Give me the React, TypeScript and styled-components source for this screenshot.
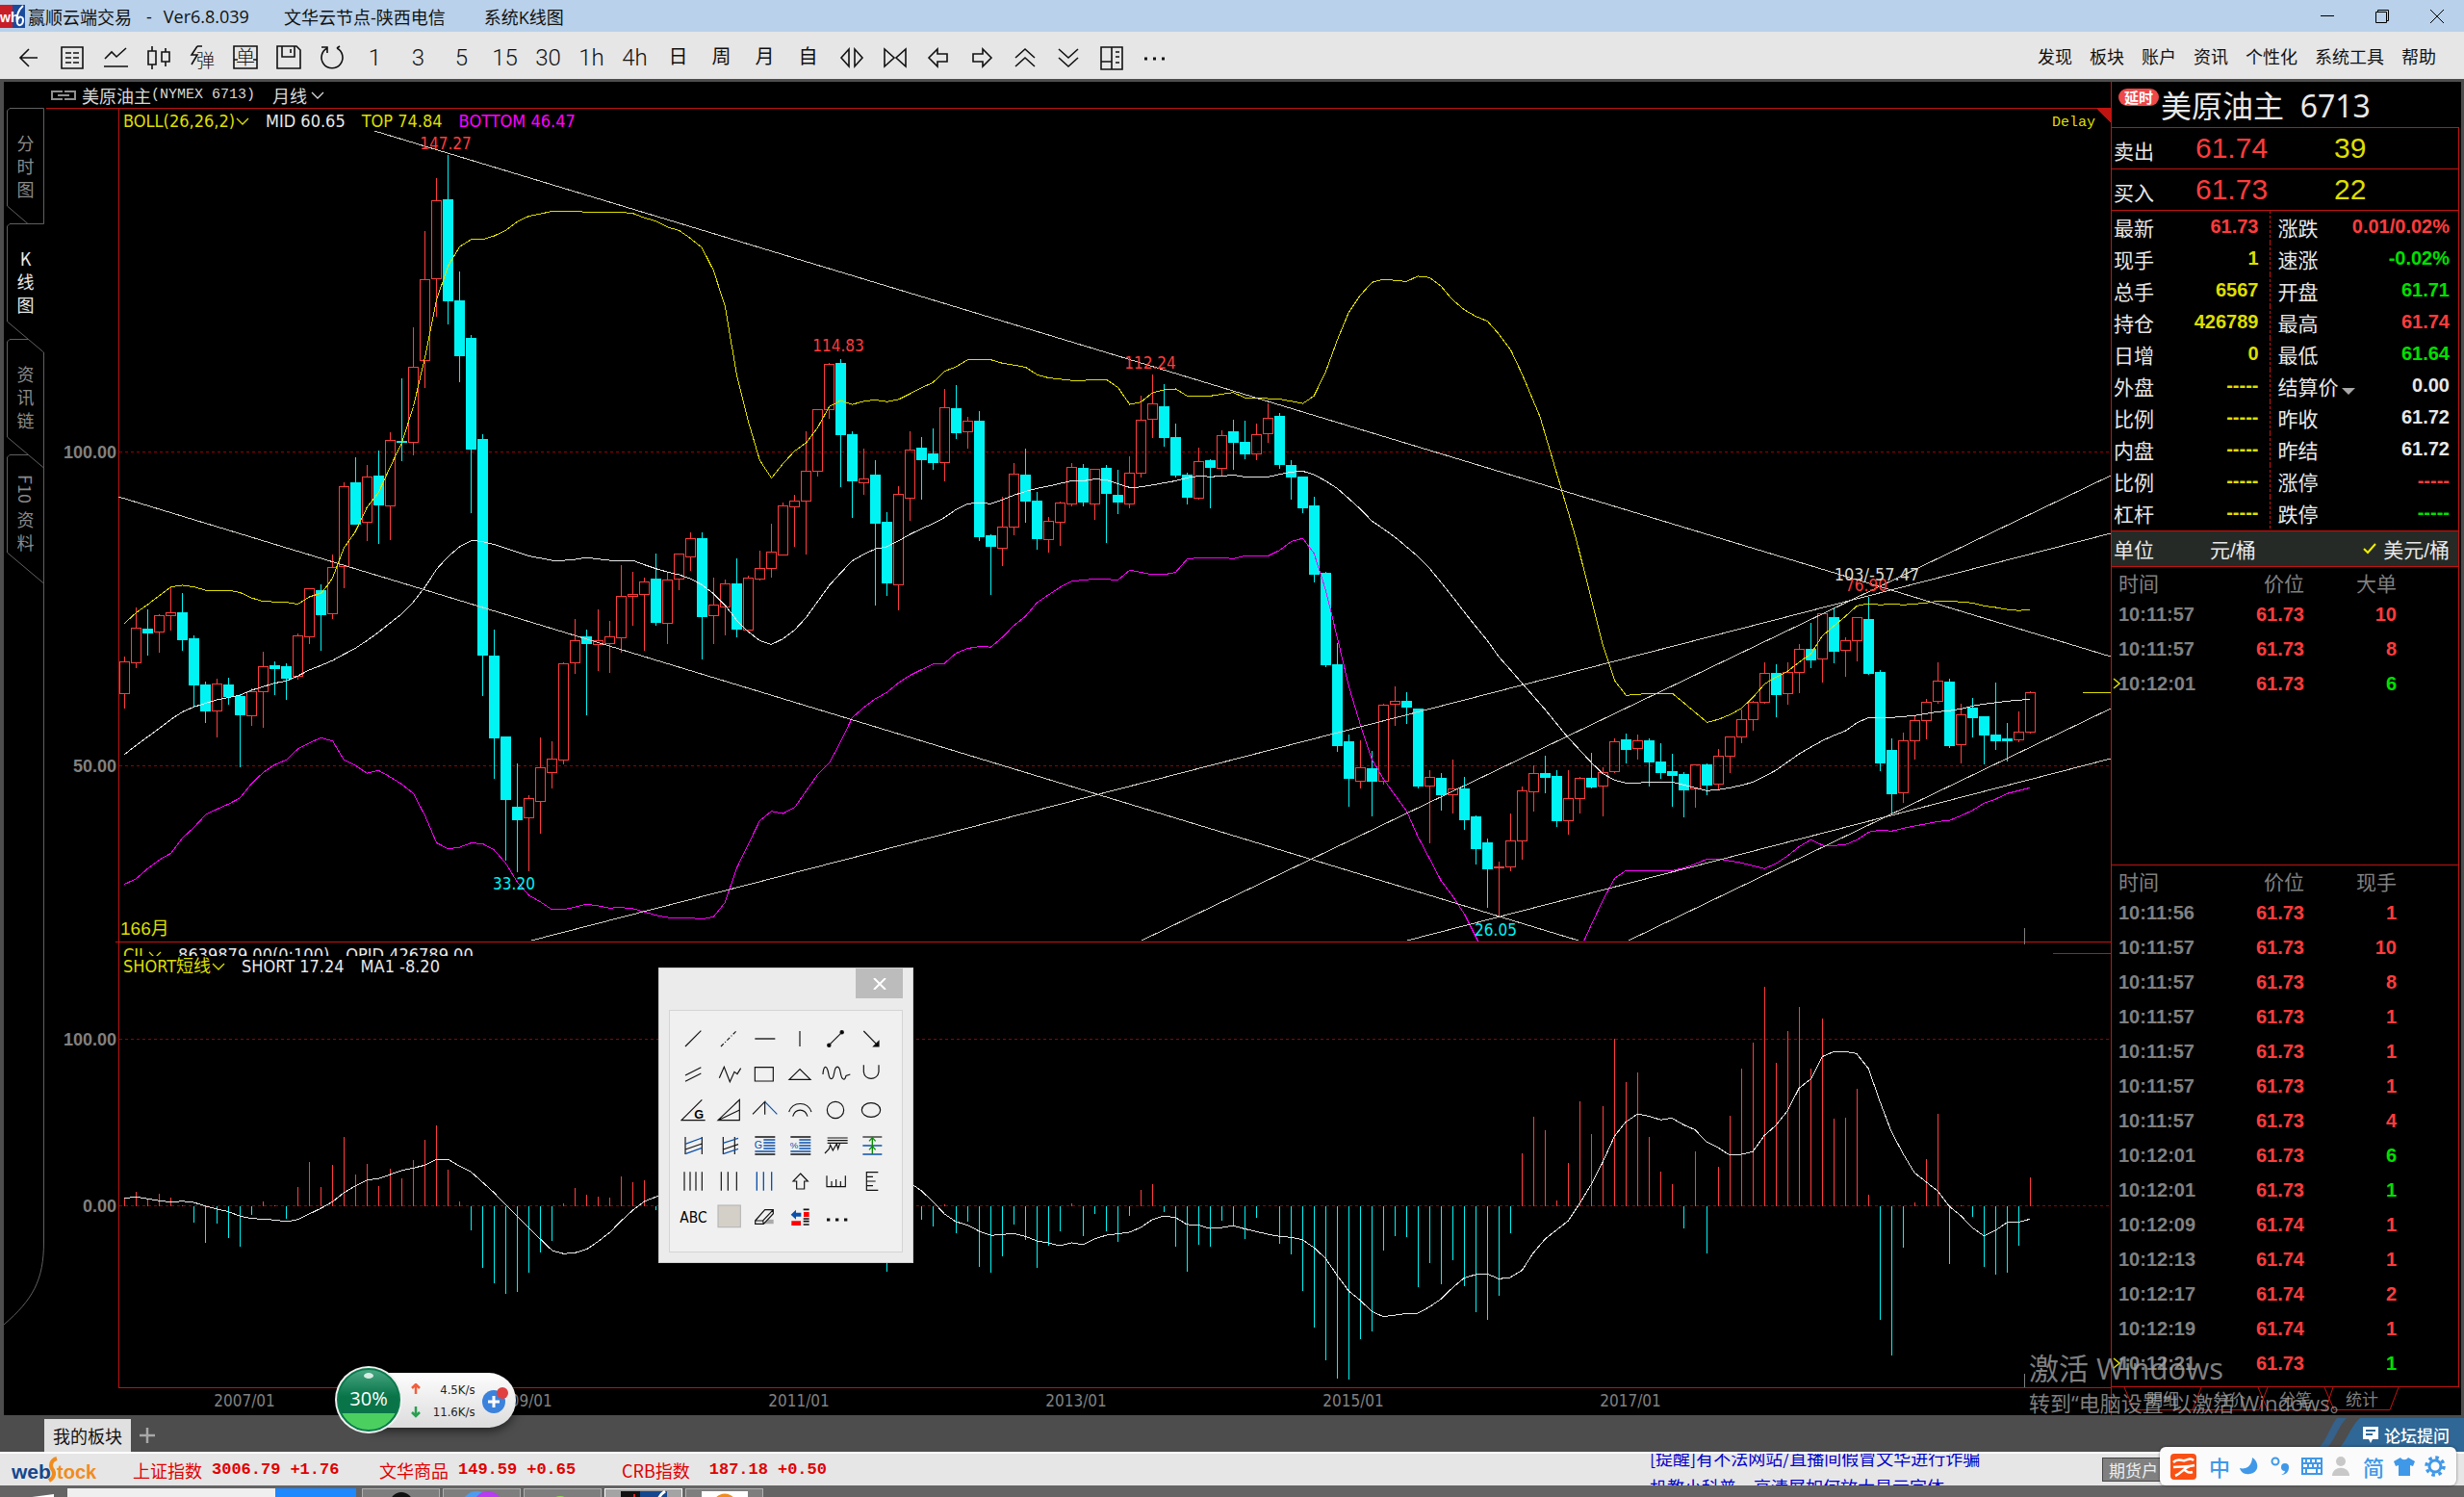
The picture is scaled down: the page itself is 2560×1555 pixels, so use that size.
import React from "react";
import styled, { createGlobalStyle } from "styled-components";

const CJK = `"Noto Sans CJK SC", sans-serif`;
const UI = `"DejaVu Sans Condensed", "Noto Sans", ${CJK}`;
const TITLE = `"Open Sans", ${CJK}`;
const ARIAL = `"Liberation Sans", ${CJK}`;
const MONO = `"Liberation Mono", ${CJK}`;

const C = {
  red: "#ff3c3c",
  line: "#c01410",
  grid: "#960000",
  cyan: "#00f4f4",
  yellow: "#dede00",
  magenta: "#ff00ff",
  green: "#00e000",
  white: "#e8e8e8",
  grey: "#808080",
  frame: "#4d4d4d",
};

const Global = createGlobalStyle`
  * { box-sizing: border-box; }
  body { margin: 0; background: #646464; font-family: ${UI}; }
  button { font: inherit; color: inherit; background: none; border: 0; padding: 0; cursor: pointer; }
  svg { display: block; }
  a { color: inherit; text-decoration: none; }
`;

const Page = styled.div`
  position: relative;
  display: flex;
  flex-direction: column;
  height: 100vh;
  overflow: hidden;
`;

/* ---------- title bar ---------- */
const TitleBar = styled.header`
  flex: none;
  display: flex;
  align-items: center;
  height: 33px;
  background: #b9d1ea;
  color: #111;
  font: 18px ${TITLE};
  white-space: pre;
`;
const TitleText = styled.span<{ $gap: number }>`
  margin-left: ${(p) => p.$gap}px;
`;
const WindowButtons = styled.div`
  margin-left: auto;
  display: flex;
`;
const WindowButton = styled.button`
  width: 57px;
  height: 33px;
  display: grid;
  place-items: center;
`;

/* ---------- tool bar ---------- */
const ToolBar = styled.nav`
  flex: none;
  display: flex;
  align-items: center;
  height: 49px;
  padding: 0 29px 0 7px;
  background: #e6e6e6;
  color: #111;
`;
const Tool = styled.button`
  width: 45px;
  height: 49px;
  padding-top: 4px;
  display: grid;
  place-items: center;
  font: 300 24px Roboto, ${CJK};
`;
const CjkTool = styled(Tool)`
  font: 20px ${CJK};
  padding-top: 0;
`;
const Menu = styled.div`
  margin-left: auto;
  display: flex;
  gap: 18px;
  font: 18px ${CJK};
`;

/* ---------- work area ---------- */
const Work = styled.main`
  flex: none;
  display: flex;
  background: #000;
  border: solid ${C.frame};
  border-width: 3px 3px 0 4px;
`;
const Left = styled.section`
  flex: 1;
  min-width: 0;
`;
const SymbolBar = styled.div`
  display: flex;
  align-items: center;
  height: 27px;
  padding-left: 49px;
  color: #d8d8d8;
  font: 18px ${CJK};
`;
const SymbolName = styled.span`
  margin-left: 6px;
`;
const Code = styled.span`
  font: 15px/27px ${MONO};
  white-space: pre;
`;
const Period = styled.button`
  display: flex;
  align-items: center;
  gap: 4px;
  margin-left: 18px;
`;
const ChartRow = styled.div`
  display: flex;
`;
const Rail = styled.div`
  position: relative;
  flex: none;
  width: 42px;
  display: flex;
  flex-direction: column;
`;
const RailLines = styled.svg`
  position: absolute;
  left: 0;
  top: 0;
`;
const RailTab = styled.button<{ $on?: boolean }>`
  position: relative;
  height: 120px;
  display: flex;
  flex-direction: column;
  align-items: center;
  justify-content: center;
  padding-left: 3px;
  color: ${(p) => (p.$on ? "#e8e8e8" : "#8a8a8a")};
  font: 18px/24px ${CJK};
`;
const Sideways = styled.span`
  writing-mode: vertical-rl;
  padding: 4px 0;
`;
const ChartBox = styled.div`
  position: relative;
  flex: 1;
  min-width: 0;
  & > svg {
    width: 100%;
    height: auto;
  }
`;
const Legend = styled.div<{ $top: number; $h: number }>`
  position: absolute;
  left: 82px;
  top: ${(p) => p.$top}px;
  height: ${(p) => p.$h}px;
  overflow: hidden;
  display: flex;
  gap: 17px;
  font: 18px/24px ${UI};
  color: ${C.white};
  white-space: pre;
`;
const LegendItem = styled.span<{ $c?: string }>`
  display: flex;
  align-items: center;
  gap: 1px;
  height: 24px;
  color: ${(p) => p.$c || C.white};
`;

/* ---------- quote panel ---------- */
const Quote = styled.aside`
  flex: none;
  width: 364px;
  padding: 0 2px 0 0;
  border-left: 1px solid ${C.line};
  display: flex;
  flex-direction: column;
  font-family: ${ARIAL};
  color: ${C.white};
`;
const QuoteBody = styled.div`
  flex: 1;
  display: flex;
  flex-direction: column;
  border: solid ${C.line};
  border-width: 1px 1px 1px 0;
`;
const QuoteTitle = styled.h1`
  display: flex;
  height: 47px;
  margin: 0;
  padding-left: 7px;
  gap: 2px;
  font: 32px/50px "Noto Sans", ${CJK};
  white-space: pre;
`;
const Badge = styled.span`
  width: 42px;
  height: 18px;
  margin-top: 7px;
  border-radius: 9px;
  background: #ee4848;
  color: #fff;
  font: bold 15px/18px ${CJK};
  text-align: center;
`;
const Offer = styled.div`
  display: grid;
  grid-template-columns: 85px 144px 1fr;
  align-items: center;
  height: 43px;
  padding-left: 2px;
  border-bottom: 1px solid ${C.line};
  font-size: 30px;
`;
const OfferLabel = styled.span`
  font-size: 21px;
  padding-top: 4px;
`;
const Tint = styled.span<{ $c: string }>`
  color: ${(p) => p.$c};
`;
const StatsBox = styled.div`
  height: 333px;
  border-bottom: 1px solid ${C.line};
`;
const Stats = styled.table`
  width: 100%;
  border-collapse: collapse;
  table-layout: fixed;
  tr {
    height: 33px;
  }
  th {
    width: 73px;
    padding: 0 0 0 2px;
    text-align: left;
    font: 21px/30px ${CJK};
    white-space: nowrap;
  }
  th:nth-child(3) {
    width: 82px;
    padding-left: 8px;
    border-left: 1px dashed ${C.line};
  }
  td {
    padding: 0 11px 0 0;
    text-align: right;
    font: bold 20px ${ARIAL};
  }
  td:nth-child(2) {
    width: 91px;
  }
  td:nth-child(4) {
    padding-right: 9px;
  }
`;
const StatValue = styled.td<{ $c: string }>`
  color: ${(p) => p.$c};
`;
const Caret = styled.span`
  display: inline-block;
  margin-left: 3px;
  border: 7px solid transparent;
  border-top-color: #a8a8a8;
  border-bottom: 0;
`;
const UnitRow = styled.div`
  display: flex;
  align-items: center;
  height: 37px;
  padding: 0 9px 0 2px;
  background: #262a26;
  border-bottom: 1px solid ${C.line};
  font-size: 21px;
`;
const UnitButton = styled.button<{ $gap: string }>`
  display: flex;
  align-items: center;
  gap: 7px;
  margin-left: ${(p) => p.$gap};
`;
const Ticks = styled.table<{ $grow?: boolean }>`
  display: block;
  flex: ${(p) => (p.$grow ? "1" : "none")};
  padding-top: 4px;
  padding-bottom: ${(p) => (p.$grow ? 0 : 6)}px;
  border-bottom: ${(p) => (p.$grow ? `1px solid ${C.line}` : "0")};
  border-spacing: 0;
  th {
    height: 27px;
    padding: 0 0 3px;
    font: 21px/24px ${CJK};
    color: ${C.grey};
    text-align: right;
  }
  td {
    height: 36px;
    padding: 0;
    font: bold 20px/36px ${ARIAL};
    text-align: right;
    color: ${C.red};
  }
  th:first-child,
  td:first-child {
    position: relative;
    width: 100px;
    padding-left: 7px;
    text-align: left;
    color: ${C.grey};
  }
  th:nth-child(2) {
    width: 100px;
  }
  th:nth-child(3) {
    width: 96px;
  }
`;
const Volume = styled.td<{ $down: boolean }>`
  && {
    color: ${(p) => (p.$down ? C.green : C.red)};
  }
`;
const Marker = styled.svg`
  position: absolute;
  left: 1px;
  top: 12px;
`;
const QuoteTabs = styled.div`
  position: relative;
  display: flex;
  height: 29px;
  padding-left: 36px;
  gap: 35px;
  font: 17px/24px ${CJK};
  color: ${C.grey};
  svg {
    position: absolute;
    left: 0;
    top: 0;
  }
  button {
    height: 24px;
  }
`;

/* ---------- lower bars ---------- */
const BoardBar = styled.div`
  flex: none;
  display: flex;
  align-items: flex-end;
  height: 38px;
  padding-left: 46px;
  background: ${C.frame};
`;
const BoardTab = styled.button`
  height: 34px;
  width: 90px;
  background: #e0e0e0;
  color: #111;
  font: 18px ${CJK};
`;
const AddBoard = styled.button`
  width: 34px;
  height: 34px;
  display: grid;
  place-items: center;
`;
const Forum = styled.a`
  position: relative;
  margin-left: auto;
  display: flex;
  align-items: center;
  width: 136px;
  height: 35px;
  color: #fff;
`;
const ForumShape = styled.svg`
  position: absolute;
  left: 0;
  top: 0;
`;
const ForumLabel = styled.span`
  position: relative;
  display: flex;
  align-items: center;
  gap: 6px;
  padding-left: 31px;
  font: 500 17px/30px ${CJK};
`;
const TickerBar = styled.div`
  flex: none;
  display: flex;
  align-items: center;
  height: 35px;
  padding-left: 12px;
  border-top: 2px solid #fff;
  background: #e6e6e6;
  color: #e00000;
  font: 18px ${CJK};
`;
const Logo = styled.span`
  width: 90px;
`;
const Index = styled.span<{ $w: number }>`
  display: flex;
  align-items: center;
  gap: 10px;
  width: ${(p) => p.$w}px;
  margin-left: 36px;
`;
const Figure = styled.b`
  font: bold 17px ${MONO};
`;
const News = styled.div`
  align-self: stretch;
  margin-left: auto;
  width: 470px;
  overflow: hidden;
  color: #0000c8;
  font: 18px/30px ${CJK};
  display: flex;
  flex-direction: column;
  justify-content: center;
  padding-top: 4px;
  white-space: nowrap;
`;
const Account = styled.button`
  width: 80px;
  height: 25px;
  margin-right: 296px;
  padding-left: 6px;
  text-align: left;
  background: #808080;
  border: 1px solid #444;
  color: #eee;
  font: 17px/22px ${CJK};
`;
const TaskBar = styled.footer`
  flex: 1;
  min-height: 0;
  display: flex;
  padding: 3px 0 0 18px;
  background: #646464;
  overflow: hidden;
`;
const StartMark = styled.button`
  width: 52px;
  height: 24px;
`;
const SearchBox = styled.input`
  width: 216px;
  height: 30px;
  border: 0;
  background: #efefef;
`;
const SearchGo = styled.button`
  width: 84px;
  height: 30px;
  margin-right: 3px;
  background: #1e88ff;
`;
const TaskButton = styled.button<{ $on?: boolean }>`
  width: 81px;
  height: 30px;
  margin-left: 3px;
  background: ${(p) => (p.$on ? "#a4a4a4" : "#7e7e7e")};
  border: 1px solid ${(p) => (p.$on ? "#fff" : "#b0b0b0")};
  display: grid;
  justify-items: center;
  align-items: start;
`;
const Clock = styled.time`
  margin: 5px 40px 0 auto;
  color: #fff;
  font: 17px/20px ${TITLE};
`;

/* ---------- floating windows ---------- */
const Watermark = styled.div`
  position: absolute;
  right: 124px;
  top: 1399px;
  width: 328px;
  color: rgba(170, 170, 170, 0.75);
  font: 22px/28px "Open Sans", ${CJK};
  white-space: nowrap;
  pointer-events: none;
`;
const WatermarkTitle = styled.div`
  font-size: 31px;
  line-height: 44px;
`;
const Palette = styled.div`
  position: absolute;
  left: 684px;
  top: 1005px;
  width: 265px;
  padding: 0 10px 10px;
  background: #ebebeb;
  border: 1px solid #d0d0d0;
`;
const PaletteClose = styled.button`
  display: grid;
  place-items: center;
  width: 49px;
  height: 31px;
  margin: 0 0 12px auto;
  background: #bcbcbc;
`;
const PaletteGrid = styled.div`
  display: grid;
  grid-template-columns: repeat(6, 37px);
  grid-auto-rows: 37px;
  padding: 10px 5px 18px;
  border: 1px solid #d4d4d4;
  background: #f0f0f0;
  button {
    display: grid;
    place-items: center;
  }
`;
const Meter = styled.div`
  position: absolute;
  left: 347px;
  top: 1418px;
  display: flex;
  align-items: center;
`;
const MeterBall = styled.svg`
  z-index: 1;
`;
const MeterPill = styled.div`
  display: flex;
  align-items: center;
  justify-content: space-between;
  width: 151px;
  height: 57px;
  margin-left: -34px;
  padding: 0 8px 0 42px;
  border-radius: 0 29px 29px 0;
  background: linear-gradient(#fdfdfd, #dcdcdc);
  box-shadow: 0 4px 10px rgba(0, 0, 0, 0.5);
  color: #222;
  font: 13px/23px ${UI};
`;
const Speeds = styled.div`
  width: 50px;
  text-align: right;
  white-space: nowrap;
`;
const ImeBar = styled.div`
  position: absolute;
  right: 8px;
  top: 1503px;
  width: 308px;
  height: 40px;
  padding: 0 9px 0 11px;
  display: flex;
  align-items: center;
  justify-content: space-between;
  background: #fbfbfb;
  border-radius: 6px;
  box-shadow: 0 0 3px rgba(0, 0, 0, 0.5);
  color: #4098e8;
  font: 500 22px/28px ${CJK};
`;
const ImeButton = styled.button<{ $wide?: boolean }>`
  display: grid;
  place-items: center;
  width: ${(p) => (p.$wide ? 32 : 24)}px;
  justify-content: start;
`;

/* ---------- chart data ---------- */
const STEP = 12;
const FIRST_X = 129.5;
const xOf = (i: number) => FIRST_X + STEP * i;

/* A block of samples shares one origin and one resolution on each axis. */
type Block = { x: number; y: number; kx: number; ky: number };
const B1: Block = { x: 100, y: 120, kx: 1.742, ky: 1.742 };
const B2: Block = { x: 900, y: 280, kx: 2.24, ky: 2.178 };
const B3: Block = { x: 1560, y: 560, kx: 2.45, ky: 3 };
const B4: Block = { x: 110, y: 1140, kx: 1.6, ky: 3 };
const B5: Block = { x: 1060, y: 1005, kx: 1.3754, ky: 2.851 };

/* direction, then high / body top / body bottom / low */
const CANDLES: [Block, string][] = [
  [B1, `r979,989,1046,1073 r889,928,990,999 c892,930,936,976 r902,905,935,972 r853,900,905,931 c864,899,948,967 c940,946,1030,1070 c1024,1031,1077,1098 r1019,1028,1078,1124 c1016,1030,1052,1066 c1046,1051,1084,1179 r1036,1043,1087,1103 r969,997,1043,1107 c986,995,1000,1048 c990,998,1019,1057 r937,942,1014,1020 r856,856,943,955 c848,859,904,967 r793,818,901,910 r662,671,816,855 c617,664,739,740 r632,654,736,769 c605,653,704,775 r573,588,706,767 c474,589,592,625 r382,455,591,614 r209,297,443,492 r112,154,295,363 c71,152,336,378 c282,335,434,481 c397,404,603,718 c575,587,976,1049 c929,979,1127,1199 c1124,1124,1238,1347 c1171,1251,1274,1369 r1229,1236,1271,1366 r1124,1180,1241,1298 r1132,1165,1189,1216 r988,992,1166,1173 r911,950,991,1009 c930,944,956,1084 r892,950,957,1005 r913,943,956,1007 r812,870,945,971 r824,867,870,922 r836,844,867,967 c791,838,918,922 r826,840,919,956 r791,793,839,858 r754,766,799,823 c754,765,906,983 r835,886,905,955 r839,847,889,939 c801,847,929,943 r832,837,931,935 r786,820,839,840 r737,790,820,836 r699,706,795,796 r686,698,708,779 r570,644,698,793 r530,532,644,653 r446,450,533,548 c439,449,578,671 c570,577,661,728 r601,658,665,685`],
  [B2, `c431,466,573,758 c547,571,710,738 r488,508,713,769 r364,408,517,568 c377,405,431,520 c359,416,436,451 r270,312,437,479 c261,314,370,383 r333,343,367,405 c320,342,605,614 c597,603,627,736 r512,582,631,669 r436,463,583,599 c405,464,524,571 c501,523,609,632 r558,569,611,640 r524,528,572,623 r436,447,530,534 c438,449,526,534 r449,452,530,566 c442,449,507,618 c451,510,527,553 r422,461,530,538 r285,341,461,469 r237,304,339,381 c259,311,381,399 c348,379,466,470 c459,464,516,531 r401,434,517,520 c427,433,448,538 r362,376,450,466 c338,368,391,451 c340,390,418,429 r348,373,417,431 r302,336,371,391 c324,333,440,449 c431,444,470,520 c470,470,540,551 c512,534,690,706 c682,688,895,899 c845,895,1078,1089 c1050,1069,1150,1215 r1063,1127,1158,1172 c1087,1130,1158,1237 r982,985,1158,1165 r943,977,983,1032 c954,976,989,1028 c995,995,1169,1172 r1132,1149,1168,1298 c1139,1150,1189,1222 r1108,1175,1188,1230 c1146,1174,1244,1267 c1233,1239,1309,1344 c1287,1298,1355,1444 r1339,1351,1354,1462`],
  [B3, `r852,940,1021,1034 r768,784,940,998 r702,730,787,846 c672,729,741,789 c717,738,876,894 r717,808,877,920 r738,745,808,852 c663,744,771,774 r708,727,769,861 r618,631,724,728 c603,624,654,696 r606,628,652,684 c618,627,693,768 c633,693,726,744 c666,723,735,831 c723,732,780,864 r699,703,778,834 c696,702,765,795 r651,676,763,777 r612,616,677,726 r528,562,616,633 r501,508,562,594 r381,418,508,510 c387,417,483,552 r381,415,482,513 r324,343,415,477 c258,342,375,399 r228,232,373,444 c210,243,348,384 r303,316,346,426 r240,244,316,378 c178,249,417,420 c405,414,696,720 c618,657,792,857 r600,628,790,819 r549,565,628,684 r495,508,565,621 r381,442,505,510 c432,444,642,648 r510,547,640,696 c492,525,555,615 c549,552,609,699 c444,609,627,654 c570,621,627,690 r534,601,625,630 r471,478,601,603`],
];

const TOP: [Block, string][] = [
  [B1, `51,919 72,900 93,885 135,853 156,850 177,853 198,859 239,859 260,863 281,873 302,879 344,881 365,884 386,871 407,864 418,851 428,836 448,783 469,753 490,709 511,682 532,636 553,592 574,527 595,437 616,333 637,272 658,237 679,224 700,224 720,218 741,208 762,192 783,182 804,178 825,173 867,173 888,175 950,175 971,177 992,185 1013,191 1034,202 1055,208 1075,222 1096,239 1117,280 1138,345 1159,468 1180,553 1201,624 1222,656 1243,630 1264,607 1285,592 1306,564 1327,526 1347,516 1368,523 1389,517`],
  [B2, `21,295 48,299 75,294 102,281 129,267 155,256 182,230 209,220 236,204 290,204 317,212 344,216 371,221 398,238 424,245 478,251 505,251 532,249 559,249 586,267 613,305 639,300 666,279 693,272 720,270 747,286 801,286 854,278 881,290 962,293 1016,303 1042,286 1069,232 1096,160 1123,97 1150,58 1177,29 1204,22 1257,27 1284,15 1311,18 1338,38 1365,69 1392,91 1419,106 1446,117 1473,147 1500,182 1527,238 1568,333`],
  [B3, `190,0 258,330 288,441 317,487 376,481 435,481 464,510 494,541 523,571 552,562 582,547 611,527 641,492 670,451 699,430 729,411 758,383 788,357 817,301 846,271 876,240 905,208 935,201 964,205 993,202 1023,205 1081,199 1111,193 1140,193 1170,196 1199,199 1228,208 1258,213 1287,219 1317,223 1346,219`],
];
const MID: [Block, string][] = [
  [B1, `51,1156 72,1140 114,1109 135,1093 156,1079 177,1070 219,1057 260,1049 281,1040 323,1027 344,1023 365,1014 386,1003 407,995 428,986 448,975 469,964 490,950 511,935 532,918 553,902 574,880 595,853 616,821 637,798 658,780 679,769 700,771 720,776 741,783 762,790 783,797 804,801 825,805 846,805 867,803 888,800 929,805 971,805 992,813 1013,820 1034,826 1055,831 1075,838 1096,849 1117,865 1138,886 1159,913 1180,934 1201,950 1222,957 1243,947 1264,931 1285,908 1306,879 1327,850 1347,828 1368,806 1389,794`],
  [B2, `21,632 48,627 75,614 102,599 129,586 155,575 182,561 209,543 236,530 263,528 290,530 317,521 344,510 371,502 398,495 424,490 478,478 505,478 532,474 559,476 586,485 613,493 639,492 720,478 747,471 774,467 801,469 854,465 881,469 935,469 989,458 1016,456 1042,464 1069,478 1096,495 1123,518 1150,542 1177,569 1204,587 1231,606 1257,627 1284,649 1311,676 1338,708 1365,741 1392,775 1419,808 1446,840 1473,877`],
  [B3, `23,408 111,531 165,612 229,697 258,731 288,751 317,760 347,760 376,757 435,757 464,766 494,775 523,784 552,781 582,775 611,767 641,757 670,739 699,720 729,694 758,669 788,648 817,628 846,612 876,597 905,572 935,556 993,556 1052,550 1111,538 1140,535 1170,529 1199,520 1228,514 1287,505 1346,499`],
];
const BOTTOM_A: [Block, string][] = [
  [B1, `51,1391 72,1381 93,1363 114,1347 135,1335 156,1307 177,1288 198,1265 219,1255 239,1246 260,1235 281,1209 302,1189 323,1175 344,1166 365,1146 386,1135 407,1126 428,1132 448,1166 469,1176 490,1190 511,1185 532,1197 553,1210 574,1227 595,1267 616,1316 637,1327 658,1324 679,1316 700,1318 720,1329 741,1353 762,1387 783,1411 804,1423 825,1437 846,1437 888,1427 908,1430 929,1434 950,1433 971,1435 992,1441 1013,1447 1034,1451 1075,1452 1096,1454 1117,1450 1138,1424 1159,1362 1180,1319 1201,1276 1222,1259 1243,1263 1264,1252 1285,1222 1306,1192 1327,1171 1347,1134 1368,1090 1389,1071`],
  [B2, `21,971 48,957 75,935 102,918 129,905 155,893 182,891 209,868 236,857 263,853 290,854 317,832 344,805 371,784 398,753 424,736 451,719 478,705 532,700 586,702 613,680 639,685 666,690 693,690 720,685 747,655 774,652 828,652 854,654 881,648 935,648 962,635 989,615 1016,608 1042,642 1069,724 1096,832 1123,942 1150,1030 1177,1108 1204,1153 1231,1190 1257,1224 1284,1283 1311,1333 1338,1383 1365,1418 1392,1458 1424,1520`],
];
const BOTTOM_B: [Block, string][] = [
  [B3, `210,1252 229,1201 258,1126 288,1057 317,1033 435,1033 464,1025 494,1012 523,997 552,997 611,1009 641,1018 670,1027 699,1011 729,986 758,958 788,937 817,954 846,955 876,952 905,937 935,913 964,907 993,910 1023,901 1111,880 1140,877 1170,862 1199,845 1228,823 1258,810 1287,793 1346,775`],
];
const MA1: [Block, string][] = [
  [B4, `31,314 50,310 70,316 89,322 108,326 127,323 146,327 165,338 184,347 204,356 223,370 242,377 261,379 281,382 300,387 319,380 338,363 357,346 377,325 396,296 415,275 434,257 453,253 473,240 492,227 511,220 530,211 549,193 569,193 588,214 607,232 626,264 645,296 665,335 684,370 703,407 722,441 742,477 761,487 780,484 799,473 818,449 838,420 857,384 876,351 895,324 918,307 1000,270 1150,230 1300,240 1342,273 1356,291 1375,325 1394,363 1413,387 1433,398 1452,417 1471,430 1509,424 1529,433`],
  [B5, `24,810 41,816 57,824 73,815 90,821 106,804 123,793 156,784 172,770 189,746 205,736 222,740 238,761 255,763 271,773 288,770 304,765 321,774 354,790 370,796 387,799 403,806 420,830 436,861 453,912 469,957 486,986 502,1018 519,1034 552,1025 568,1024 585,1005 601,982 618,948 634,920 651,909 667,907 684,922 700,918 717,897 733,846 750,804 783,750 799,700 816,642 832,578 849,500 865,458 882,434 898,440 915,451 931,446 948,466 964,480 981,517 997,533 1014,556 1031,553 1047,545 1063,498 1080,467 1096,425 1113,357 1130,330 1146,264 1163,249 1179,249 1195,255 1212,299 1229,400 1245,487 1262,553 1278,608 1311,662 1328,708 1344,735 1361,771 1377,795 1394,778 1410,755 1427,754 1443,745`],
];

/* SHORT histogram: first index of the run, block, bar ends */
const BARS: [number, Block, string][] = [
  [0, B4, `312 294 318 300 313 337 390 453 393 438 465 366 324 336 378 279 201 279 210 123 240 207 276 222 252 195 132 87 225 324 414 531 579 612 606 546 483 447 330 282 303 309 312 246 264 258 351`],
  [66, B4, `543`],
  [69, B4, `381 402 333 423 387 528 546 495 396`],
  [78, B5, `807 889 824 781 698 795 730 781 813 736 659 641 724 827 901 821 827 750 767 804 741 706 818 850 958 1066 1163 1217 1220 1100 1078 838 795 798 947 875 938 867 944 1021 1043 972 787 550 442 482 690 579 396 493 411 211 339 311 502 604 641 773 545 847 590 439 299 222 57 282 188 117 299 151 448 445 359 673 1043 1149 830 696 567 433 878 705 738 887 909 904 824 621`],
];
const ZERO_Y = 1252.5;

const TRENDS = [
  [389, 136, 2193, 682],
  [123, 516, 1640, 977],
  [552, 977, 2193, 554],
  [1186, 977, 2193, 494],
  [1462, 977, 2193, 788],
  [1692, 977, 2193, 736],
];

const snap = (v: number) => Math.round(v - 0.5) + 0.5;
const path = (parts: [Block, string][]) =>
  parts
    .flatMap(([b, s]) =>
      s.split(" ").map((p) => {
        const [u, v] = p.split(",").map(Number);
        return `${(b.x + u / b.kx).toFixed(1)},${(b.y + v / b.ky).toFixed(1)}`;
      }),
    )
    .join(" ");

const candles = CANDLES.flatMap(([b, s]) =>
  s.split(" ").map((t) => ({
    up: t[0] === "r",
    y: t.slice(1).split(",").map((v) => snap(b.y + Number(v) / b.ky)),
  })),
);

const bars = BARS.flatMap(([start, b, s]) =>
  s.split(" ").map((v, k) => ({ i: start + k, y: b.y + Number(v) / b.ky })),
);

const PRICE_TAGS: [string, number, number, string][] = [
  ["147.27", 463, 155, C.red],
  ["114.83", 871, 365, C.red],
  ["112.24", 1195, 383, C.red],
  ["76.90", 1939, 614, C.red],
  ["33.20", 534, 924, C.cyan],
  ["26.05", 1554, 972, C.cyan],
];

const ChartText = styled.text`
  font: 17px ${UI};
  text-anchor: middle;
`;
const NoteText = styled(ChartText)`
  font-size: 18px;
`;
const AxisText = styled.text`
  font: bold 18px ${ARIAL};
  fill: ${C.grey};
  text-anchor: end;
`;

function Chart() {
  return (
    <svg viewBox="46 112 2147 1358" role="img" aria-label="K线图">
      <g shapeRendering="crispEdges" fill="none" strokeWidth="1">
        <g stroke={C.grid} strokeDasharray="3 3">
          {[469.5, 795.5, 1079.5, ZERO_Y].map((y) => (
            <line key={y} x1="124" x2="2193" y1={y} y2={y} />
          ))}
        </g>
        <g stroke={C.line}>
          <path d="M48 112.5H2193M123.5 112V1441.5M120 978.5H2193M2133 990.5H2193M123 1441.5H2193" />
          <path d="M2179 113H2193V127Z" fill={C.line} />
        </g>
        <path d="M2103.5 964V981M2103.5 1427V1441" stroke="#808080" />
        {candles.map((c, i) => {
          const x = xOf(i);
          const [hi, top, bot, lo] = c.y;
          const col = c.up ? C.red : C.cyan;
          return (
            <g key={i} stroke={col}>
              <path d={`M${x} ${hi}V${top}M${x} ${bot}V${lo}`} />
              <rect x={x - 5} y={top} width="10" height={Math.max(1, bot - top)} fill={c.up ? "none" : col} />
            </g>
          );
        })}
        {bars.map((b) => (
          <line key={b.i} x1={xOf(b.i)} x2={xOf(b.i)} y1={ZERO_Y} y2={b.y} stroke={b.y < ZERO_Y ? C.red : C.cyan} />
        ))}
        <polyline points={path(TOP)} stroke={C.yellow} />
        <polyline points={path(MID)} stroke={C.white} />
        <polyline points={path(BOTTOM_A)} stroke={C.magenta} />
        <polyline points={path(BOTTOM_B)} stroke={C.magenta} />
        <polyline points={path(MA1)} stroke={C.white} />
        {TRENDS.map(([x1, y1, x2, y2]) => (
          <line key={x1} x1={x1} y1={y1} x2={x2} y2={y2} stroke="#d4d0c8" />
        ))}
        <path d="M2164 719.5H2193" stroke={C.yellow} />
      </g>
      {PRICE_TAGS.map(([t, x, y, c]) => (
        <ChartText key={t} x={x} y={y} fill={c}>{t}</ChartText>
      ))}
      <NoteText x="1950" y="603" fill="#dcdcd0">103/-57.47</NoteText>
      {["2007", "2009", "2011", "2013", "2015", "2017"].map((t, i) => (
        <ChartText key={t} x={254 + 288 * i} y={1461} fill={C.grey}>{t}/01</ChartText>
      ))}
      <AxisText x="121" y="476">100.00</AxisText>
      <AxisText x="121" y="802">50.00</AxisText>
      <AxisText x="121" y="1086">100.00</AxisText>
      <AxisText x="121" y="1259">0.00</AxisText>
      <text x="125" y="971" fill={C.yellow} fontSize="19" fontFamily={ARIAL}>166月</text>
      <text x="2132" y="131" fill={C.yellow} fontSize="15" fontFamily={MONO}>Delay</text>
    </svg>
  );
}

/* ---------- icons ---------- */
const Chevron = () => (
  <svg width="14" height="10" viewBox="0 0 14 10" fill="none" stroke="currentColor" strokeWidth="1.3">
    <path d="M1 2L7 8L13 2" />
  </svg>
);

const Glyph = ({ children }: { children: React.ReactNode }) => (
  <svg width="30" height="30" viewBox="-1 -1 30 30" fill="none" stroke="#111" strokeWidth="1.6">
    {children}
  </svg>
);
const glyphText = { fill: "#111", stroke: "none", fontFamily: "Noto Sans CJK SC" };

const TOOLS: [string, React.ReactNode][] = [
  ["返回", <path d="M23 14H5M14 5L5 14L14 23" />],
  ["列表", <path d="M3 3H25V25H3ZM7 9H13M15 9H21M7 14H13M15 14H21M7 19H13M15 19H21" />],
  ["走势", <path d="M3 15L10 8L15 13L25 4M2 23H27" />],
  ["K线", <path d="M3 7H11V21H3ZM7 2V7M7 21V26M17 8H25V18H17ZM21 4V8M21 18V23" />],
  ["弹", <><path d="M9 2L3 11H9L3 21M9 2H14" /><text x="8" y="24" fontSize="19" {...glyphText}>弹</text></>],
  ["单", <><path d="M2 2H26V25H2ZM2 16H6M22 16H26" /><text x="4" y="21" fontSize="20" {...glyphText}>单</text></>],
  ["保存", <path d="M2 2H22L26 6V25H2ZM7 2V13H20V2M16 5V9" />],
  ["刷新", <path d="M9 4A11 11 0 1 0 19 4M3 3H9V9M19 4L22 2" />],
];
const PERIODS = ["1", "3", "5", "15", "30", "1h", "4h"];
const CJK_PERIODS = ["日", "周", "月", "自"];
const NAV: [string, React.ReactNode][] = [
  ["放大", <path d="M11 5V23L3 14ZM17 5V23L25 14Z" />],
  ["缩小", <path d="M3 5V23L13 14ZM25 5V23L15 14Z" />],
  ["左移", <path d="M4 14L13 5V10H23V18H13V23Z" />],
  ["右移", <path d="M24 14L15 5V10H5V18H15V23Z" />],
  ["上翻", <path d="M4 14L14 5L24 14M4 23L14 14L24 23" />],
  ["下翻", <path d="M4 5L14 14L24 5M4 14L14 23L24 14" />],
  ["布局", <path d="M3 3H25V26H3ZM14 3V26M3 18H14M18 8H22M18 13H22M18 19H22" />],
  ["更多", <path d="M3 15H6M12 15H15M21 15H24" strokeWidth="3" />],
];

const BLUE = "#0a50aa";
const PALETTE: React.ReactNode[] = [
  <path d="M-24 24L25 -25" />,
  <path d="M-24 24L25 -25" strokeDasharray="12 6 3 6" />,
  <path d="M-29 0H34" strokeWidth="4" />,
  <path d="M0 -24V24" />,
  <><path d="M-20 20L20 -20" /><circle cx="-20" cy="20" r="5" fill="#000" /><circle cx="20" cy="-20" r="5" fill="#000" /></>,
  <><path d="M-23 -24L22 22" /><path d="M24 24H8L24 8Z" fill="#000" /></>,
  <path d="M-24 3L25 -22M-24 22L25 -3" />,
  <path d="M-29 11L-14 -23L4 23L18 -8L27 -1L38 -19" />,
  <path d="M-29 -22H28V21H-29Z" />,
  <path d="M0 -16L-33 16H33Z" />,
  <path d="M-39 0C-37 -30 -27 -30 -22 -4C-18 20 -8 20 -4 -4C0 -30 12 -30 16 -4C20 20 30 20 33 4L46 0" />,
  <path d="M-23 -29V-8C-20 20 20 20 24 -8V-29" />,
  <><path d="M-36 32L28 -32M-38 32H38" /><text x="4" y="26" fontSize="38" fontWeight="bold" fontFamily="Liberation Sans" fill="#000" stroke="none">G</text></>,
  <path d="M-33 32H34V-32ZM-33 32L34 0" />,
  <><path d="M-36 13L2 -26V14" /><path d="M2 -26L40 13" stroke={BLUE} /></>,
  <path d="M-34 6C-22 -28 24 -28 36 6M-22 20C-14 -6 16 -6 24 20" />,
  <circle r="26" />,
  <ellipse rx="29" ry="22" />,
  <><path d="M-24 -27V27M28 -27V27M-24 12L28 -6" /><path d="M-24 -5L28 -24M-24 26L28 7" stroke={BLUE} /></>,
  <><path d="M-17 -27V27M19 -27V27M-17 12L30 -4" /><path d="M-17 -8L30 -23M-17 26L30 10" stroke={BLUE} /></>,
  <><path d="M-29 -27H34M-29 27H34" strokeWidth="4" /><path d="M-2 -18H34M-2 -9H34M-2 0H34M-2 9H34M-29 18H34" stroke={BLUE} strokeWidth="4" /><text x="-31" y="10" fontSize="32" fontFamily="Liberation Sans" fill={BLUE} stroke="none">G</text></>,
  <><path d="M-29 -27H34M-29 27H34" strokeWidth="4" /><path d="M-2 -18H34M-2 -9H34M-2 0H34M-2 9H34M-29 18H34" stroke={BLUE} strokeWidth="4" /><text x="-31" y="9" fontSize="29" fontFamily="Liberation Sans" fill={BLUE} stroke="none">%</text></>,
  <path d="M-25 -24H38M-25 -16H38M-25 -8H38M-33 24L-20 10L-16 -2L-8 15L4 -6L8 10L14 -8" />,
  <><path d="M-26 -27H34" /><path d="M-26 0H34M-26 27H34" stroke={BLUE} strokeWidth="4" /><path d="M4 -27V27M-6 -14L4 -25L14 -14M-6 13L4 2L14 13" stroke="#0a8a0a" strokeWidth="4" /></>,
  <path d="M-27 -29V29M-9 -29V29M9 -29V29M28 -29V29" />,
  <path d="M-23 -29V29M-2 -29V29M25 -29V29" />,
  <path d="M-23 -29V29M-2 -29V29M23 -29V29" stroke={BLUE} strokeWidth="4" />,
  <path d="M2 -24L25 0H14V24H-10V0H-21Z" />,
  <path d="M-27 -17V17H31V-17M-12 17V0M2 17V-6M16 17V0" />,
  <path d="M22 -28H-14V28H22M-14 -14H6M-14 0H14M-14 14H6" />,
  <text x="-41" y="18" fontSize="46" fontFamily="DejaVu Sans Condensed" fill="#000" stroke="none">ABC</text>,
  <rect x="-33" y="-36" width="70" height="68" fill="#d4d0c8" stroke="#b8b8b8" />,
  <><path d="M0 22H29V8H12Z" fill="#aaa" stroke="none" /><path d="M-28 12L2 -22H28V-10L-2 22H-28ZM-28 12H-4L28 -22M-4 12L-2 22" /></>,
  <><path d="M-28 -7L-12 -22V-13H4V-1H-12V8Z" fill={BLUE} stroke="none" /><path d="M12 -15H29V0H12ZM-26 13H3V27H-26Z" fill="#f00" stroke="none" /><path d="M11 -23H29M11 6H29M11 14H29M11 24H29" strokeWidth="5" /></>,
  <path d="M-27 9H-17M0 9H10M27 9H37" strokeWidth="9" />,
];

/* ---------- tables ---------- */
const STATS: [string, string, string, string, string, string][] = [
  ["最新", "61.73", C.red, "涨跌", "0.01/0.02%", C.red],
  ["现手", "1", C.yellow, "速涨", "-0.02%", C.green],
  ["总手", "6567", C.yellow, "开盘", "61.71", C.green],
  ["持仓", "426789", C.yellow, "最高", "61.74", C.red],
  ["日增", "0", C.yellow, "最低", "61.64", C.green],
  ["外盘", "-----", C.yellow, "结算价", "0.00", C.white],
  ["比例", "-----", C.yellow, "昨收", "61.72", C.white],
  ["内盘", "-----", C.yellow, "昨结", "61.72", C.white],
  ["比例", "-----", C.yellow, "涨停", "-----", C.red],
  ["杠杆", "-----", C.yellow, "跌停", "-----", C.green],
];
type Tick = [string, string, string, boolean?];
const BIG: Tick[] = [
  ["10:11:57", "61.73", "10"],
  ["10:11:57", "61.73", "8"],
  ["10:12:01", "61.73", "6", true],
];
const TRADES: Tick[] = [
  ["10:11:56", "61.73", "1"],
  ["10:11:57", "61.73", "10"],
  ["10:11:57", "61.73", "8"],
  ["10:11:57", "61.73", "1"],
  ["10:11:57", "61.73", "1"],
  ["10:11:57", "61.73", "1"],
  ["10:11:57", "61.73", "4"],
  ["10:12:01", "61.73", "6", true],
  ["10:12:01", "61.73", "1", true],
  ["10:12:09", "61.74", "1"],
  ["10:12:13", "61.74", "1"],
  ["10:12:17", "61.74", "2"],
  ["10:12:19", "61.74", "1"],
  ["10:12:21", "61.73", "1", true],
];

function TickTable({ head, rows, grow }: { head: string; rows: Tick[]; grow?: boolean }) {
  return (
    <Ticks $grow={grow}>
      <thead>
        <tr><th>时间</th><th>价位</th><th>{head}</th></tr>
      </thead>
      <tbody>
        {rows.map(([t, p, v, down], i) => (
          <tr key={i}>
            <td>
              {i === rows.length - 1 && (
                <Marker width="8" height="12" viewBox="0 0 8 12" fill="none" stroke={C.yellow} strokeWidth="1.5">
                  <path d="M1 1L7 6L1 11" />
                </Marker>
              )}
              {t}
            </td>
            <td>{p}</td>
            <Volume $down={!!down}>{v}</Volume>
          </tr>
        ))}
      </tbody>
    </Ticks>
  );
}

export default function App() {
  return (
    <Page>
      <Global />
      <TitleBar>
        <svg width="26" height="24" viewBox="0 0 26 24">
          <rect width="13" height="24" fill="#c81e28" />
          <rect x="13" width="13" height="24" fill="#1a4a9c" />
          <text x="0" y="18" fontSize="14" fontWeight="bold" fontFamily="Liberation Sans" fill="#fff">wh</text>
          <path d="M24 1C18 6 17 13 18 19C19 23 24 21 24 16C24 12 20 11 18 16" fill="none" stroke="#fff" strokeWidth="2" />
        </svg>
        <TitleText $gap={3}>赢顺云端交易</TitleText>
        <TitleText $gap={15}>-</TitleText>
        <TitleText $gap={12}>Ver6.8.039</TitleText>
        <TitleText $gap={36}>文华云节点-陕西电信</TitleText>
        <TitleText $gap={40}>系统K线图</TitleText>
        <WindowButtons>
          <WindowButton aria-label="最小化">
            <svg width="14" height="14" viewBox="0 0 14 14" stroke="#000"><path d="M0 6.5H14" /></svg>
          </WindowButton>
          <WindowButton aria-label="还原">
            <svg width="14" height="14" viewBox="0 0 14 14" fill="none" stroke="#000"><path d="M.5 2.5H11.5V13.5H.5ZM2.5 2.5V.5H13.5V11.5H11.5" /></svg>
          </WindowButton>
          <WindowButton aria-label="关闭">
            <svg width="14" height="14" viewBox="0 0 14 14" stroke="#000"><path d="M0 0L14 14M14 0L0 14" /></svg>
          </WindowButton>
        </WindowButtons>
      </TitleBar>

      <ToolBar>
        {TOOLS.map(([n, g]) => (
          <Tool key={n} aria-label={n}><Glyph>{g}</Glyph></Tool>
        ))}
        {PERIODS.map((p) => <Tool key={p}>{p}</Tool>)}
        {CJK_PERIODS.map((p) => <CjkTool key={p}>{p}</CjkTool>)}
        {NAV.map(([n, g]) => (
          <Tool key={n} aria-label={n}><Glyph>{g}</Glyph></Tool>
        ))}
        <Menu>
          {["发现", "板块", "账户", "资讯", "个性化", "系统工具", "帮助"].map((m) => (
            <button key={m}>{m}</button>
          ))}
        </Menu>
      </ToolBar>

      <Work>
        <Left>
          <SymbolBar>
            <svg width="26" height="10" viewBox="0 0 26 10" fill="none" stroke="#909090" strokeWidth="2">
              <path d="M11 2V1H1V9H11V8M15 2V1H25V9H15V8M7 5H19" />
            </svg>
            <SymbolName>美原油主</SymbolName>
            <Code>(NYMEX 6713)</Code>
            <Period>月线<Chevron /></Period>
          </SymbolBar>
          <ChartRow>
            <Rail>
              <RailLines width="42" height="1300" viewBox="4 112 42 1300" fill="none" stroke="#606060">
                <path d="M7.5 214V115L10 112.5H45.5V232.5H10L7.5 235V334L45.5 366V1290C45.5 1330 34 1350 4 1376M7.5 214L29 232.5M29 352.5H10L7.5 355V454L45.5 486M29 472.5H10L7.5 475V574L45.5 606" />
                <path d="M45.5 233V365" stroke="#000" strokeWidth="2" />
              </RailLines>
              <RailTab><span>分</span><span>时</span><span>图</span></RailTab>
              <RailTab $on><span>K</span><span>线</span><span>图</span></RailTab>
              <RailTab><span>资</span><span>讯</span><span>链</span></RailTab>
              <RailTab><Sideways>F10</Sideways><span>资</span><span>料</span></RailTab>
            </Rail>
            <ChartBox>
              <Chart />
              <Legend $top={2} $h={24}>
                <LegendItem $c={C.yellow}>BOLL(26,26,2)<Chevron /></LegendItem>
                <LegendItem>MID 60.65</LegendItem>
                <LegendItem $c={C.yellow}>TOP 74.84</LegendItem>
                <LegendItem $c={C.magenta}>BOTTOM 46.47</LegendItem>
              </Legend>
              <Legend $top={868} $h={13}>
                <LegendItem $c={C.yellow}>CJL<Chevron /></LegendItem>
                <LegendItem>8639879.00(0:100)</LegendItem>
                <LegendItem>OPID 426789.00</LegendItem>
              </Legend>
              <Legend $top={880} $h={24}>
                <LegendItem $c={C.yellow}>SHORT短线<Chevron /></LegendItem>
                <LegendItem>SHORT 17.24</LegendItem>
                <LegendItem>MA1 -8.20</LegendItem>
              </Legend>
            </ChartBox>
          </ChartRow>
        </Left>

        <Quote>
          <QuoteTitle><Badge>延时</Badge>美原油主  6713</QuoteTitle>
          <QuoteBody>
            <Offer><OfferLabel>卖出</OfferLabel><Tint $c={C.red}>61.74</Tint><Tint $c={C.yellow}>39</Tint></Offer>
            <Offer><OfferLabel>买入</OfferLabel><Tint $c={C.red}>61.73</Tint><Tint $c={C.yellow}>22</Tint></Offer>
            <StatsBox>
              <Stats>
                <tbody>
                  {STATS.map(([a, av, ac, b, bv, bc], i) => (
                    <tr key={i}>
                      <th scope="row">{a}</th>
                      <StatValue $c={ac}>{av}</StatValue>
                      <th scope="row">{b}{b === "结算价" && <Caret />}</th>
                      <StatValue $c={bc}>{bv}</StatValue>
                    </tr>
                  ))}
                </tbody>
              </Stats>
            </StatsBox>
            <UnitRow>
              单位
              <UnitButton $gap="58px">元/桶</UnitButton>
              <UnitButton $gap="auto">
                <svg width="14" height="12" viewBox="0 0 14 12" fill="none" stroke="#f0f000" strokeWidth="2"><path d="M1 6L5 10L13 1" /></svg>
                美元/桶
              </UnitButton>
            </UnitRow>
            <TickTable head="大单" rows={BIG} grow />
            <TickTable head="现手" rows={TRADES} />
          </QuoteBody>
          <QuoteTabs>
            <svg width="300" height="24" viewBox="0 0 300 24" fill="none" stroke={C.line}>
              <path d="M13 0L23 23.5H84L93 0M83 23.5H153L162 0M152 0L162 23.5H222L230 0M221 0L231 23.5H289L298 0" />
            </svg>
            {["明细", "分价", "分笔", "统计"].map((t) => <button key={t}>{t}</button>)}
          </QuoteTabs>
        </Quote>
      </Work>

      <BoardBar>
        <BoardTab>我的板块</BoardTab>
        <AddBoard aria-label="添加">
          <svg width="16" height="16" viewBox="0 0 16 16" stroke="#a8a8a8" strokeWidth="2.5"><path d="M8 0V16M0 8H16" /></svg>
        </AddBoard>
        <Forum href="#">
          <ForumShape width="136" height="35" viewBox="0 0 136 35" fill="#2f6796" overflow="visible">
            <path d="M28 0H136V35H2C12 30 18 8 28 0Z" />
            <path d="M-20 35C-8 28 -4 10 4 0H14C4 10 0 30 -12 35Z" fill="#35618a" />
          </ForumShape>
          <ForumLabel>
            <svg width="16" height="17" viewBox="0 0 16 17">
              <path d="M0 0H16V13H10L8 17L6 13H0Z" fill="#fff" />
              <path d="M3 4H13M3 8H10" stroke="#2f6796" strokeWidth="2" />
            </svg>
            论坛提问
          </ForumLabel>
        </Forum>
      </BoardBar>

      <TickerBar>
        <Logo>
          <svg width="90" height="28" viewBox="0 0 90 28">
            <text x="0" y="23" fontSize="21" fontWeight="bold" fontFamily="Liberation Sans" fill="#14478e">web</text>
            <path d="M47 2C40 4 40 11 43 14C45 18 44 22 39 25" fill="none" stroke="#f08c1e" strokeWidth="4" />
            <text x="47" y="23" fontSize="20" fontWeight="bold" fontFamily="Liberation Sans" fill="#f08c1e">tock</text>
          </svg>
        </Logo>
        <Index $w={220}>上证指数 <Figure>3006.79</Figure><Figure>+1.76</Figure></Index>
        <Index $w={216}>文华商品 <Figure>149.59</Figure><Figure>+0.65</Figure></Index>
        <Index $w={216}>CRB指数 <span /><Figure>187.18</Figure><Figure>+0.50</Figure></Index>
        <News>
          <a href="#">[提醒]有不法网站/直播间假冒文华进行诈骗</a>
          <a href="#">机教小科普，高清屏如何放大显示字体</a>
        </News>
        <Account>期货户</Account>
      </TickerBar>

      <TaskBar>
        <StartMark aria-label="开始">
          <svg width="38" height="16" viewBox="0 0 38 16" fill="#fff"><path d="M0 7L38 2V16H0Z" /></svg>
        </StartMark>
        <SearchBox aria-label="搜索" />
        <SearchGo aria-label="搜索一下" />
        <TaskButton aria-label="QQ"><svg width="26" height="26"><circle cx="13" cy="15" r="12" fill="#111" /></svg></TaskButton>
        <TaskButton aria-label="浏览器"><svg width="40" height="26"><circle cx="14" cy="17" r="15" fill="#4c9cf0" /><circle cx="26" cy="17" r="15" fill="#b83cf0" /></svg></TaskButton>
        <TaskButton aria-label="微信"><svg width="26" height="30"><circle cx="10" cy="18" r="11" fill="#8cdc4a" /></svg></TaskButton>
        <TaskButton $on aria-label="赢顺"><svg width="48" height="26"><rect y="2" width="20" height="22" fill="#111" /><rect x="20" y="2" width="28" height="22" fill="#14478e" /><path d="M14 5V20" stroke="#d22" strokeWidth="2" /><path d="M46 2C40 6 38 10 38 20" stroke="#fff" strokeWidth="3" fill="none" /></svg></TaskButton>
        <TaskButton aria-label="文档"><svg width="48" height="26"><rect y="2" width="48" height="22" fill="#fff" /><circle cx="24" cy="17" r="10" fill="none" stroke="#f08c1e" strokeWidth="5" /></svg></TaskButton>
        <Clock>10:07</Clock>
      </TaskBar>

      <Palette role="dialog" aria-label="画线工具">
        <PaletteClose aria-label="关闭">
          <svg width="14" height="12" viewBox="0 0 14 12" stroke="#fff" strokeWidth="2"><path d="M1 0L13 12M13 0L1 12" /></svg>
        </PaletteClose>
        <PaletteGrid>
          {PALETTE.map((g, i) => (
            <button key={i} aria-label={`画线 ${i + 1}`}>
              <svg width="36" height="36" viewBox="-54 -54 108 108" fill="none" stroke="#111" strokeWidth="3.5">{g}</svg>
            </button>
          ))}
        </PaletteGrid>
      </Palette>

      <Meter>
        <MeterBall width="72" height="73" viewBox="0 0 72 73">
          <defs>
            <linearGradient id="ball" x1="0" y1="0" x2="0" y2="1">
              <stop offset="0" stopColor="#4aa884" />
              <stop offset=".45" stopColor="#087448" />
              <stop offset="1" stopColor="#087448" />
            </linearGradient>
          </defs>
          <circle cx="36" cy="36" r="35" fill="#f0f0f0" />
          <circle cx="36" cy="36" r="32" fill="url(#ball)" />
          <path d="M8 50H64A31 31 0 0 1 8 50Z" fill="#4bd060" />
          <circle cx="36" cy="36" r="32" fill="none" stroke="#0a7a4c" strokeWidth="2" />
          <ellipse cx="36" cy="11" rx="5" ry="3" fill="#fff" opacity=".8" />
          <text x="36" y="42" textAnchor="middle" fontSize="20" fontFamily="Open Sans" fill="#fff">30%</text>
        </MeterBall>
        <MeterPill>
          <svg width="10" height="36" viewBox="0 0 10 36" fill="none" strokeWidth="2.5">
            <path d="M5 11V2M1 5L5 1L9 5" stroke="#f0603c" />
            <path d="M5 24V33M1 30L5 34L9 30" stroke="#28a050" />
          </svg>
          <Speeds>4.5K/s<br />11.6K/s</Speeds>
          <svg width="28" height="32" viewBox="0 0 28 32">
            <circle cx="13" cy="17" r="12" fill="#3a82dc" />
            <path d="M13 11V23M7 17H19" stroke="#fff" strokeWidth="3" />
            <circle cx="22" cy="8" r="6" fill="#e04040" />
          </svg>
        </MeterPill>
      </Meter>

      <Watermark>
        <WatermarkTitle>激活 Windows</WatermarkTitle>
        转到“电脑设置”以激活 Windows。
      </Watermark>

      <ImeBar>
        <ImeButton $wide aria-label="输入法">
          <svg width="27" height="27" viewBox="0 0 27 27"><rect width="27" height="27" rx="4" fill="#fa5014" /><path d="M3 9C8 4 11 8 15 7C19 6 21 4 24 7M3 14C10 13 18 14 25 12M20 13C14 15 12 20 5 23M14 17C17 17 17 21 23 19" fill="none" stroke="#fff" strokeWidth="2.5" /></svg>
        </ImeButton>
        <ImeButton>中</ImeButton>
        <ImeButton aria-label="半角">
          <svg width="20" height="18" viewBox="0 0 20 18"><path d="M13 0C21 5 20 16 10 17C5 18 1 15 0 11C8 13 13 7 13 0Z" fill="#4098e8" /></svg>
        </ImeButton>
        <ImeButton aria-label="标点">
          <svg width="20" height="20" viewBox="0 0 20 20"><circle cx="5" cy="5" r="3.5" fill="none" stroke="#4098e8" strokeWidth="2" /><path d="M19 11A4 4 0 1 0 15 15C15 17 13 18 11 19C17 19 19 15 19 11Z" fill="#4098e8" /></svg>
        </ImeButton>
        <ImeButton aria-label="键盘">
          <svg width="22" height="18" viewBox="0 0 22 18" fill="none" stroke="#4098e8" strokeWidth="2"><path d="M1 1H21V17H1ZM1 6H21M1 11H21M5 1V6M10 1V6M15 1V6M7 6V11M12 6V11M17 6V11M5 11V17M16 11V17" /></svg>
        </ImeButton>
        <ImeButton aria-label="用户">
          <svg width="18" height="20" viewBox="0 0 18 20" fill="#c8c8c8"><circle cx="9" cy="5" r="5" /><path d="M0 20C0 9 18 9 18 20Z" /></svg>
        </ImeButton>
        <ImeButton>简</ImeButton>
        <ImeButton aria-label="皮肤">
          <svg width="22" height="19" viewBox="0 0 22 19" fill="#4098e8"><path d="M7 0C9 3 13 3 15 0L22 4L20 9L17 8V19H5V8L2 9L0 4Z" /></svg>
        </ImeButton>
        <ImeButton aria-label="设置">
          <svg width="22" height="22" viewBox="0 0 22 22" fill="none" stroke="#4098e8"><circle cx="11" cy="11" r="6" strokeWidth="3" /><circle cx="11" cy="11" r="9" strokeWidth="3.5" strokeDasharray="3.5 3.57" /></svg>
        </ImeButton>
      </ImeBar>
    </Page>
  );
}
